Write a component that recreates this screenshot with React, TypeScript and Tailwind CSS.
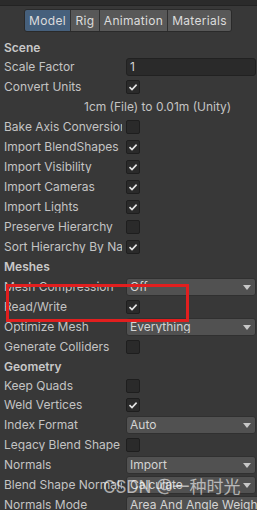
import React from 'react';

type Row =
  | { kind: 'header'; label: string; h?: string }
  | { kind: 'check'; label: string; checked: boolean; h?: string }
  | { kind: 'select'; label: string; value: string }
  | { kind: 'text'; label: string; value: string }
  | { kind: 'note'; value: string };

const rows: Row[] = [
  { kind: 'header', label: 'Scene', h: 'h-[19px]' },
  { kind: 'text', label: 'Scale Factor', value: '1' },
  { kind: 'check', label: 'Convert Units', checked: true },
  { kind: 'note', value: '1cm (File) to 0.01m (Unity)' },
  { kind: 'check', label: 'Bake Axis Conversion', checked: false },
  { kind: 'check', label: 'Import BlendShapes', checked: true },
  { kind: 'check', label: 'Import Visibility', checked: true },
  { kind: 'check', label: 'Import Cameras', checked: true },
  { kind: 'check', label: 'Import Lights', checked: true },
  { kind: 'check', label: 'Preserve Hierarchy', checked: false },
  { kind: 'check', label: 'Sort Hierarchy By Name', checked: true },
  { kind: 'header', label: 'Meshes' },
  { kind: 'select', label: 'Mesh Compression', value: 'Off' },
  { kind: 'check', label: 'Read/Write', checked: true },
  { kind: 'select', label: 'Optimize Mesh', value: 'Everything' },
  { kind: 'check', label: 'Generate Colliders', checked: false },
  { kind: 'header', label: 'Geometry', h: 'h-[19px]' },
  { kind: 'check', label: 'Keep Quads', checked: false, h: 'h-[19px]' },
  { kind: 'check', label: 'Weld Vertices', checked: true },
  { kind: 'select', label: 'Index Format', value: 'Auto' },
  { kind: 'check', label: 'Legacy Blend Shape Normals', checked: false },
  { kind: 'select', label: 'Normals', value: 'Import' },
  { kind: 'select', label: 'Blend Shape Normals', value: 'Calculate' },
  { kind: 'select', label: 'Normals Mode', value: 'Area And Angle Weighted' },
];

const tabs = [
  { name: 'Model', w: 'w-[45px]' },
  { name: 'Rig', w: 'w-[29px]' },
  { name: 'Animation', w: 'w-[68px]' },
  { name: 'Materials', w: 'w-[64px]' },
];

function Label({ text }: { text: string }) {
  return (
    <div className="w-[122px] shrink-0 overflow-hidden whitespace-nowrap pl-1 text-[#c4c4c4]">
      {text}
    </div>
  );
}

function Checkbox({ checked }: { checked: boolean }) {
  return (
    <div className="ml-1 flex h-[14px] w-[14px] items-center justify-center rounded-[2px] border border-[#1e1e1e] bg-[#2a2a2a]">
      {checked && (
        <svg width="10" height="10" viewBox="0 0 10 10">
          <path d="M1.5 5.2 L4 7.6 L8.6 2.6" fill="none" stroke="#e4e4e4" strokeWidth="1.6" />
        </svg>
      )}
    </div>
  );
}

function Select({ value }: { value: string }) {
  return (
    <div className="ml-1 flex h-[18px] flex-1 items-center rounded-[3px] border border-[#303030] bg-[#515151] pl-[3px] pr-[4px]">
      <span className="flex-1 overflow-hidden whitespace-nowrap text-[#d4d4d4]">{value}</span>
      <svg width="8" height="5" viewBox="0 0 8 5" className="ml-[2px] shrink-0">
        <path d="M0 0 H8 L4 5 Z" fill="#c8c8c8" />
      </svg>
    </div>
  );
}

export default function App() {
  return (
    <div
      className="relative h-[510px] w-[257px] overflow-hidden bg-[#383838] text-[12px] leading-none"
      style={{ fontFamily: 'Inter, "Noto Sans CJK SC", sans-serif' }}
    >
      <div className="h-[6px] border-b border-[#232323] bg-[#2b2b2b]" />

      {/* tabs */}
      <div className="flex pl-[24px] pt-[3px]">
        <div className="flex h-[23px] overflow-hidden rounded-[3px] border border-[#2a2a2a] text-[12px] tracking-[0.3px] text-[#dcdcdc]">
          {tabs.map((t, i) => (
            <div
              key={t.name}
              className={
                'flex items-center justify-center ' +
                t.w +
                (i === 0 ? ' bg-[#46607c]' : ' border-l border-[#303030] bg-[#585858]')
              }
            >
              {t.name}
            </div>
          ))}
        </div>
      </div>

      <div className="mt-[6px] flex flex-col pr-[1px]">
        {rows.map((r, i) => {
          if (r.kind === 'header')
            return (
              <div key={i} className={'flex items-center pl-1 font-semibold text-[#c8c8c8] ' + (r.h ?? 'h-5')}>
                {r.label}
              </div>
            );
          if (r.kind === 'note')
            return (
              <div key={i} className="flex h-5 items-center pl-[84px] text-[#c4c4c4]">
                {r.value}
              </div>
            );
          return (
            <div key={i} className={'flex items-center ' + ((r.kind === 'check' && r.h) || 'h-5')}>
              <Label text={r.label} />
              {r.kind === 'check' && <Checkbox checked={r.checked} />}
              {r.kind === 'select' && <Select value={r.value} />}
              {r.kind === 'text' && (
                <div className="ml-1 flex h-[18px] flex-1 items-center rounded-[3px] border border-[#212121] bg-[#2a2a2a] pl-[3px] text-[#d4d4d4]">
                  {r.value}
                </div>
              )}
            </div>
          );
        })}
      </div>

      {/* annotation box */}
      <div className="absolute left-[6px] top-[284px] h-[38px] w-[183px] border-[3px] border-[#e11f1f]" />

      {/* watermark */}
      <div className="absolute left-[103px] top-[479px] whitespace-nowrap text-[17px] text-white/60">
        CSDN @一种时光
      </div>
    </div>
  );
}
